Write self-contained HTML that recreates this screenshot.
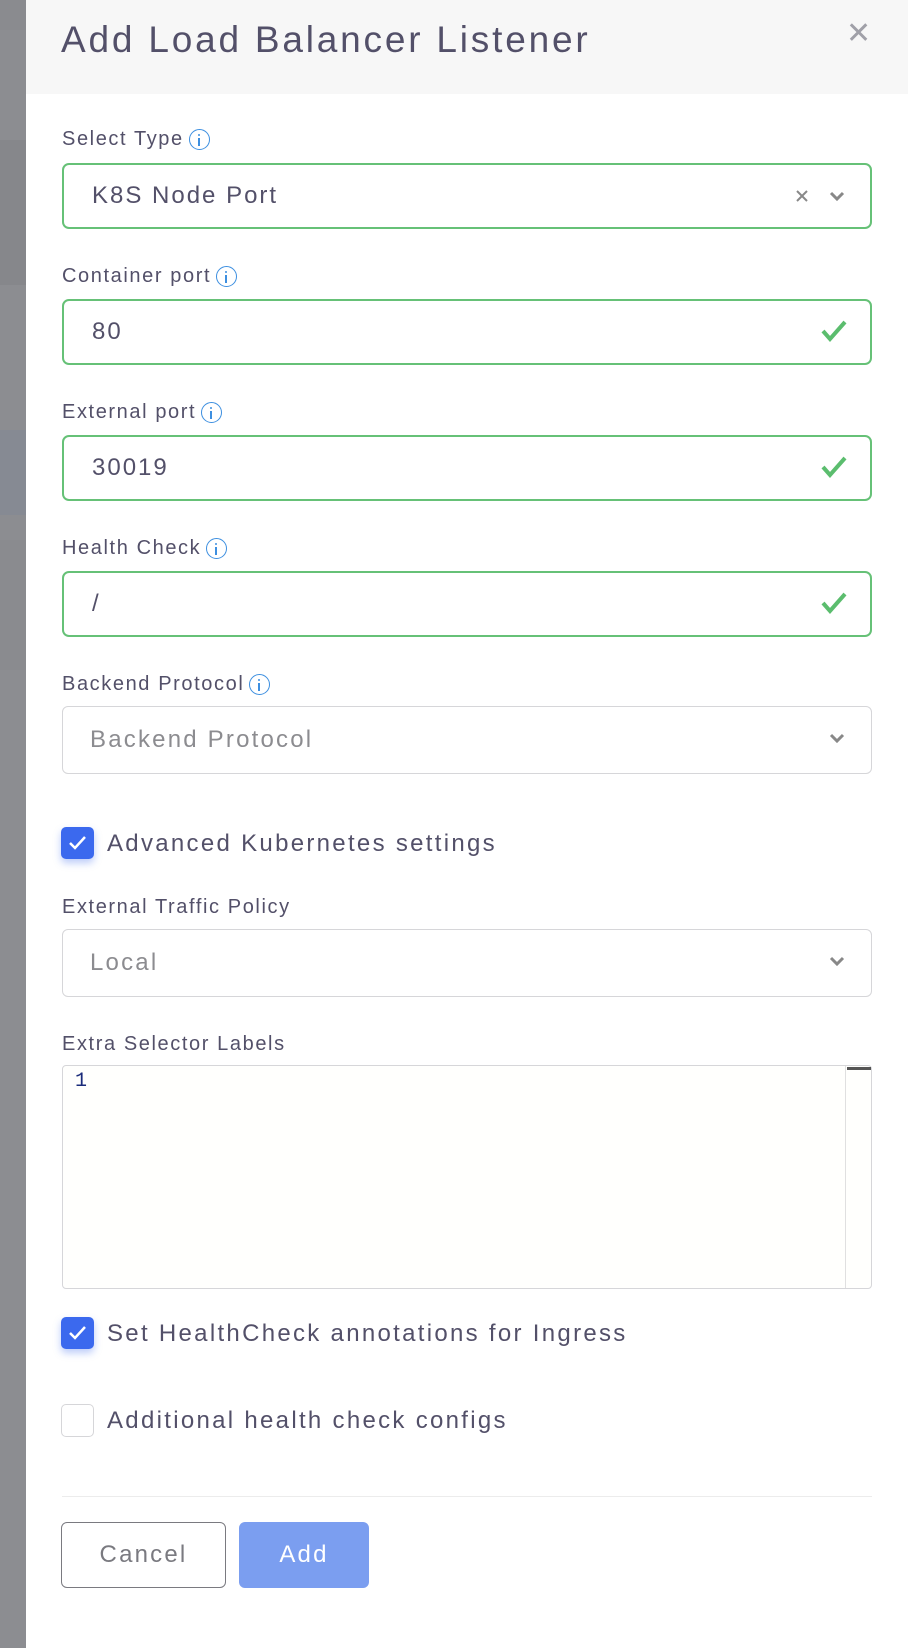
<!DOCTYPE html>
<html><head><meta charset="utf-8"><style>
*{box-sizing:border-box;margin:0;padding:0}
body{width:908px;height:1648px;overflow:hidden;background:#fff;font-family:"Liberation Sans",sans-serif;color:#535069;position:relative}
.ov{position:absolute;left:0;top:0;width:26px;height:1648px;background:#8c8d91}
.ov div{position:absolute;left:0;width:26px}
.panel{position:absolute;left:26px;top:0;width:882px;height:1648px;background:#fff}
.hdr{position:absolute;left:26px;top:0;width:882px;height:94px;background:#f7f7f7}
h1{position:absolute;left:61px;top:19px;font-size:37px;font-weight:normal;color:#535069;letter-spacing:2.8px}
.close{position:absolute;left:846px;top:16px;font-size:30px;color:#a0a0a8}
.lbl{position:absolute;left:62px;font-size:20px;color:#535069;letter-spacing:1.6px;display:flex;align-items:center}
.info{display:inline-block;width:21px;height:21px;border:1.6px solid #3d8fe0;border-radius:50%;margin-left:5px;position:relative}
.info:before{content:"";position:absolute;left:8px;top:3.5px;width:2px;height:2px;background:#3d8fe0;border-radius:1px}
.info:after{content:"";position:absolute;left:8px;top:7.5px;width:2px;height:8px;background:#3d8fe0}
.inp{position:absolute;left:62px;width:810px;height:66px;border:2.5px solid #66c177;border-radius:7px;font-size:24px;padding-left:28px;display:flex;align-items:center;color:#535069;letter-spacing:2px}
.sel{position:absolute;left:62px;width:810px;height:68px;border:1px solid #d6d6d9;border-radius:6px;font-size:24px;padding-left:27px;display:flex;align-items:center;color:#8c8c90;letter-spacing:2.2px}
.chk{position:absolute;right:22px;top:18px}
.chev{position:absolute;right:26px;top:26px}
.cb{position:absolute;left:61px;width:33px;height:32px;border-radius:5px;background:#3b69ee;box-shadow:0 4px 8px rgba(59,105,238,.35)}
.cb svg{position:absolute;left:7px;top:8px}
.cbe{position:absolute;left:61px;width:33px;height:33px;border-radius:5px;border:1px solid #d6d6d9;background:#fff}
.cbl{position:absolute;left:107px;font-size:24px;color:#535069;letter-spacing:2.3px}
.ed{position:absolute;left:62px;top:1065px;width:810px;height:224px;border:1px solid #d6d6d9;border-radius:4px;background:#fffffd}
.ed .n{position:absolute;left:12px;top:4px;font-family:"Liberation Mono",monospace;font-size:20px;color:#1a2b7a}
.ed .sb{position:absolute;left:782px;top:0;width:1px;height:222px;background:#e0e0e0}
.ed .tk{position:absolute;left:784px;top:1px;width:24px;height:3px;background:#555}
.div{position:absolute;left:62px;top:1496px;width:810px;height:1px;background:#ececec}
.btn{position:absolute;top:1522px;height:66px;border-radius:6px;font-size:24px;display:flex;align-items:center;justify-content:center;letter-spacing:2.2px}
</style></head><body>
<div class="ov"><div style="top:0;height:30px;background:#8a8b8f"></div><div style="top:140px;height:145px;background:#86878b"></div><div style="top:430px;height:85px;background:#868a93"></div><div style="top:540px;height:130px;background:#8a8b8f"></div></div>
<div class="panel"></div>
<div class="hdr"></div>
<h1>Add Load Balancer Listener</h1>
<div class="close">✕</div>

<div class="lbl" style="top:128px">Select Type<span class="info"></span></div>
<div class="inp" style="top:163px">K8S Node Port
<svg style="position:absolute;right:62px;top:25px" width="12" height="12" viewBox="0 0 12 12"><path d="M1 1L11 11M11 1L1 11" stroke="#888" stroke-width="2"/></svg>
<svg style="position:absolute;right:25px;top:26px" width="16" height="10" viewBox="0 0 16 10"><path d="M2 2L8 8L14 2" stroke="#888" stroke-width="3" fill="none"/></svg></div>

<div class="lbl" style="top:265px">Container port<span class="info"></span></div>
<div class="inp" style="top:299px">80<svg class="chk" width="28" height="24" viewBox="0 0 28 24"><path d="M3 12L10 20L25 3" stroke="#5bbd6e" stroke-width="4" fill="none"/></svg></div>

<div class="lbl" style="top:401px">External port<span class="info"></span></div>
<div class="inp" style="top:435px">30019<svg class="chk" width="28" height="24" viewBox="0 0 28 24"><path d="M3 12L10 20L25 3" stroke="#5bbd6e" stroke-width="4" fill="none"/></svg></div>

<div class="lbl" style="top:537px">Health Check<span class="info"></span></div>
<div class="inp" style="top:571px">/<svg class="chk" width="28" height="24" viewBox="0 0 28 24"><path d="M3 12L10 20L25 3" stroke="#5bbd6e" stroke-width="4" fill="none"/></svg></div>

<div class="lbl" style="top:673px">Backend Protocol<span class="info"></span></div>
<div class="sel" style="top:706px">Backend Protocol<svg class="chev" width="16" height="10" viewBox="0 0 16 10"><path d="M2 2L8 8L14 2" stroke="#888" stroke-width="3" fill="none"/></svg></div>

<div class="cb" style="top:827px"><svg width="19" height="16" viewBox="0 0 19 16"><path d="M2 8L7 13L17 2" stroke="#fff" stroke-width="2.5" fill="none"/></svg></div>
<div class="cbl" style="top:830px">Advanced Kubernetes settings</div>

<div class="lbl" style="top:896px">External Traffic Policy</div>
<div class="sel" style="top:929px">Local<svg class="chev" width="16" height="10" viewBox="0 0 16 10"><path d="M2 2L8 8L14 2" stroke="#888" stroke-width="3" fill="none"/></svg></div>

<div class="lbl" style="top:1033px">Extra Selector Labels</div>
<div class="ed"><span class="n">1</span><div class="sb"></div><div class="tk"></div></div>

<div class="cb" style="top:1317px"><svg width="19" height="16" viewBox="0 0 19 16"><path d="M2 8L7 13L17 2" stroke="#fff" stroke-width="2.5" fill="none"/></svg></div>
<div class="cbl" style="top:1320px">Set HealthCheck annotations for Ingress</div>

<div class="cbe" style="top:1404px"></div>
<div class="cbl" style="top:1407px">Additional health check configs</div>

<div class="div"></div>
<div class="btn" style="left:61px;width:165px;border:1px solid #7a7a80;color:#7a7a80;background:#fff">Cancel</div>
<div class="btn" style="left:239px;width:130px;background:#7b9ef0;color:#fff">Add</div>
</body></html>
